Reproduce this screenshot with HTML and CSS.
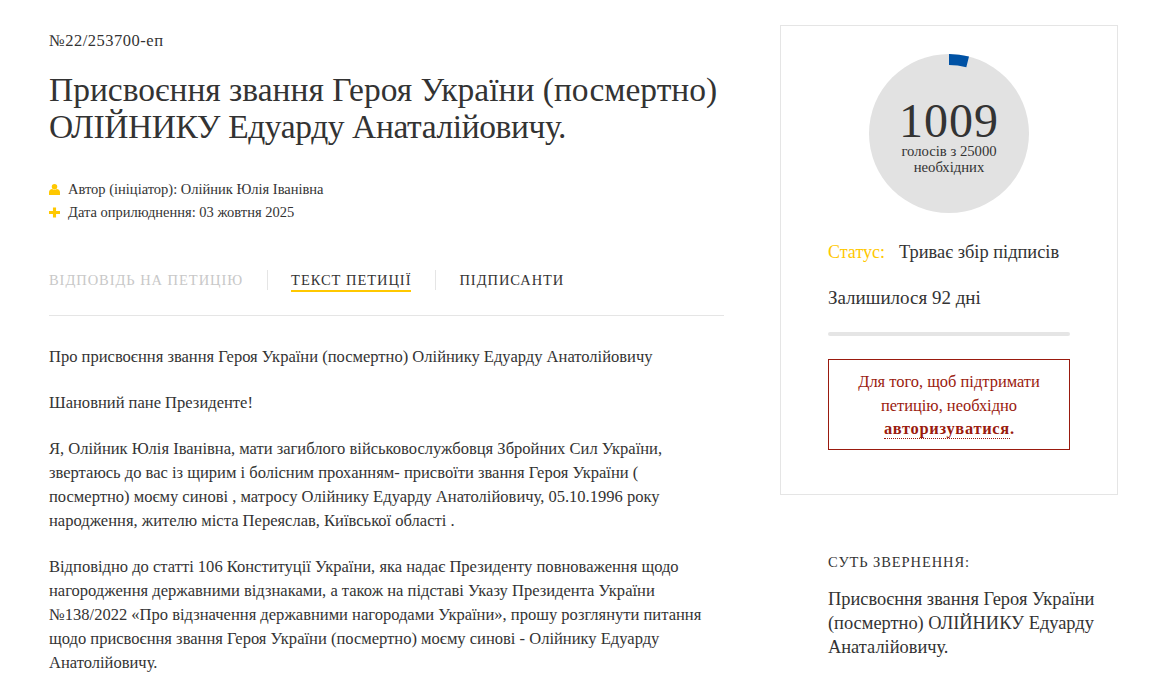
FILE: index.html
```html
<!DOCTYPE html>
<html lang="uk">
<head>
  <meta charset="UTF-8">
  <title>Петиція №22/253700-еп</title>
  <link rel="stylesheet" href="styles.css">
</head>
<body>
  <div class="page">
    <main class="petition">
      <div class="petition-number">№22/253700-еп</div>
      <h1>Присвоєння звання Героя України (посмертно)<br><span class="title-tight">ОЛІЙНИКУ Едуарду Анаталійовичу.</span></h1>

      <ul class="petition-meta">
        <li>
          <svg class="meta-icon" viewBox="0 0 12 12"><circle cx="6" cy="3" r="3"/><path d="M0 12V9C0 7 1.500 5.500 3.500 5.500C4 6.500 8 6.500 8.500 5.500C10.500 5.500 12 7 12 9V12z"/></svg>
          Автор (ініціатор): Олійник Юлія Іванівна
        </li>
        <li>
          <svg class="meta-icon" viewBox="0 0 12 12"><path d="M4.300 .5h3.400v3.800H12v3.400H7.700v3.800H4.300V7.700H0V4.300h4.300z"/></svg>
          Дата оприлюднення: 03 жовтня 2025
        </li>
      </ul>

      <nav class="tabs">
        <a class="tab tab-disabled">Відповідь на петицію</a>
        <a class="tab tab-active">Текст петиції</a>
        <a class="tab">Підписанти</a>
      </nav>

      <article class="petition-text">
        <p>Про присвоєння звання Героя України (посмертно) Олійнику Едуарду Анатолійовичу</p>
        <p>Шановний пане Президенте!</p>
        <p>Я, Олійник Юлія Іванівна, мати загиблого військовослужбовця Збройних Сил України,<br>звертаюсь до вас із щирим і болісним проханням- присвоїти звання Героя України (<br>посмертно) моєму синові , матросу Олійнику Едуарду Анатолійовичу, 05.10.1996 року<br>народження, жителю міста Переяслав, Київської області .</p>
        <p>Відповідно до статті 106 Конституції України, яка надає Президенту повноваження щодо<br>нагородження державними відзнаками, а також на підставі Указу Президента України<br>№138/2022 «Про відзначення державними нагородами України», прошу розглянути питання<br>щодо присвоєння звання Героя України (посмертно) моєму синові - Олійнику Едуарду<br>Анатолійовичу.</p>
      </article>
    </main>

    <aside class="sidebar">
      <section class="card">
        <div class="counter">
          <svg class="counter-arc" viewBox="0 0 160 160"><path d="M80 0A80 80 0 0 1 100 2.500L97.300 13.200A69 69 0 0 0 80 11z"/></svg>
          <div class="counter-value">1009</div>
          <div class="counter-label">голосів з 25000<br>необхідних</div>
        </div>
        <div class="status"><span class="status-label">Статус:</span>Триває збір підписів</div>
        <div class="days-left">Залишилося 92 дні</div>
        <div class="days-bar"></div>
        <div class="auth-notice">Для того, щоб підтримати<br>петицію, необхідно<br><a class="auth-link">авторизуватися</a><b>.</b></div>
      </section>
      <section class="summary">
        <h2>Суть звернення:</h2>
        <p>Присвоєння звання Героя України<br>(посмертно) ОЛІЙНИКУ Едуарду<br>Анаталійовичу.</p>
      </section>
    </aside>
  </div>
</body>
</html>
```

FILE: styles.css
```css
body {
  margin: 0;
  background: #fff;
  color: #333;
  font-family: "Liberation Serif", serif;
  overflow: hidden;
}

.page {
  display: flex;
  align-items: flex-start;
  padding: 25px 50px 0 49px;
  gap: 56px;
}

.petition {
  width: 675px;
  flex-shrink: 0;
}

.petition-number {
  font-size: 16.500px;
  line-height: 18px;
  letter-spacing: .5px;
  margin-top: 7px;
}

h1 {
  margin: 21px 0 0;
  font-size: 33.500px;
  line-height: 37px;
  font-weight: 400;
}

/* capitals run wider in this font, pull the second line back */
.title-tight {
  letter-spacing: -.4px;
}

.petition-meta {
  list-style: none;
  margin: 33px 0 0;
  padding: 0;
  font-size: 14.500px;
  line-height: 23px;
}

.petition-meta li {
  display: flex;
  align-items: center;
  gap: 8px;
}

.meta-icon {
  width: 11px;
  height: 11px;
  fill: #ffc800;
}

.tabs {
  display: flex;
  align-items: center;
  margin-top: 46px;
  padding-bottom: 25px;
  border-bottom: 1px solid #e5e5e5;
}

.tab {
  font-size: 14.500px;
  line-height: 20px;
  letter-spacing: .95px;
  text-transform: uppercase;
  padding-right: 24px;
  margin-right: 23px;
  border-right: 1px solid #e5e5e5;
}

.tab:last-child {
  border-right: 0;
}

.tab-disabled {
  color: #c8c8c8;
}

.tab-active {
  position: relative;
}

.tab-active::after {
  content: "";
  position: absolute;
  left: 0;
  right: 24px;
  bottom: -2px;
  height: 2px;
  background: #ffc800;
}

.petition-text {
  padding-top: 29px;
  font-size: 16.550px;
  line-height: 24px;
}

.petition-text p {
  margin: 0 0 22px;
}

.sidebar {
  width: 338px;
  flex-shrink: 0;
}

.card {
  box-sizing: border-box;
  height: 470px;
  border: 1px solid #e5e5e5;
  padding: 28px 47px 0;
}

.counter {
  position: relative;
  width: 160px;
  height: 159px;
  margin: 0 auto;
  border-radius: 50%;
  background: #e2e2e2;
  text-align: center;
}

.counter-arc {
  position: absolute;
  left: 0;
  top: 0;
  width: 160px;
  height: 160px;
  fill: #0052a5;
}

.counter-value {
  padding-top: 44px;
  font-size: 48px;
  line-height: 45px;
  letter-spacing: 1px;
}

.counter-label {
  font-size: 14.700px;
  line-height: 16px;
}

.status {
  margin-top: 27px;
  font-size: 18.400px;
  line-height: 24px;
}

.status-label {
  color: #ffc800;
  font-size: 18px;
  margin-right: 14px;
}

.days-left {
  margin-top: 22px;
  font-size: 19px;
  line-height: 24px;
}

.days-bar {
  height: 4px;
  margin-top: 22px;
  border-radius: 2px;
  background: #e5e5e5;
}

.auth-notice {
  margin-top: 23px;
  padding: 10px 0 8px;
  border: 1px solid #9a1a0e;
  color: #9a1a0e;
  font-size: 16.450px;
  line-height: 23.500px;
  text-align: center;
}

.auth-link {
  font-weight: 700;
  letter-spacing: .7px;
  border-bottom: 1px dotted #9a1a0e;
}

.summary {
  padding: 57px 0 0 48px;
}

.summary h2 {
  margin: 0;
  font-size: 14.500px;
  line-height: 20px;
  font-weight: 400;
  letter-spacing: .9px;
  text-transform: uppercase;
}

.summary p {
  margin: 15px 0 0;
  font-size: 18.400px;
  line-height: 24px;
}
```
